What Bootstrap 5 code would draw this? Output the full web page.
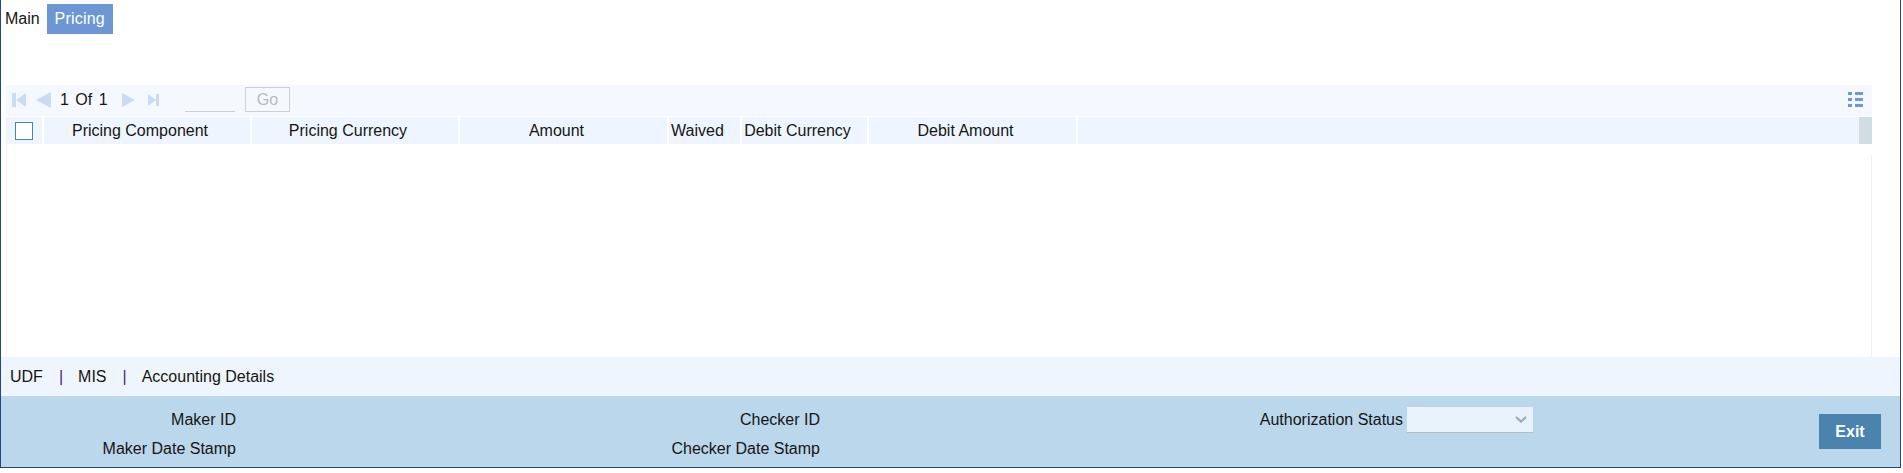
<!DOCTYPE html>
<html lang="en">
<head>
<meta charset="utf-8">
<title>Pricing</title>
<link href="https://cdn.jsdelivr.net/npm/bootstrap@5.3.0/dist/css/bootstrap.min.css" rel="stylesheet">
<style>
html,body{height:100%;background:#fff;}
body{font-family:"Liberation Sans",Arial,sans-serif;font-size:16px;color:#161513;overflow:hidden;}
.frame{width:1901px;height:468px;border:1px solid #23467f;border-top:0;display:flex;flex-direction:column;}
.tabs-bar{height:85px;padding:4px 0 0 3px;gap:6px;align-items:flex-start;}
.tab-item{height:30px;line-height:30px;padding:0 1px;color:#161513;text-decoration:none;}
.tab-item.is-on{background:#6d97d4;color:#fff;padding:0;width:66px;text-align:center;letter-spacing:.2px;}
.pager{height:31px;margin:0 28px 0 5px;background:#f5f9ff;padding:0 9px 2px 6px;}
.pg-prev{margin-left:10px;}
.pg-txt{margin-left:9px;word-spacing:2px;width:45px;white-space:nowrap;color:#161513;}
.pg-next{margin-left:17px;}
.pg-last{margin-left:13px;}
.pg-input{width:50px;height:25px;margin-left:26px;border:0;border-bottom:1px solid #ccd0d4;background:transparent;border-radius:0;padding:0;}
.pg-go{width:45px;height:25px;margin-left:10px;border:1px solid #ccd0d4;background:transparent;color:#b5b9bd;padding:0;font-size:16px;line-height:21px;border-radius:0;}
.grid-wrap{margin:1px 28px 0 5px;position:relative;flex:1;min-height:0;border-left:1px solid #eef0f5;}
.grid-tbl{table-layout:fixed;width:1865px;margin:0;border-collapse:separate;border-spacing:0;}
.grid-tbl th{height:27px;padding:0 14px 0 0;background:#eef5fe;font-weight:400;font-size:16px;text-align:center;vertical-align:middle;border:0;border-right:2px solid #fff;color:#161513;box-shadow:none;line-height:27px;white-space:nowrap;}
.grid-tbl th.fill{border-right:0;padding:0;}
.grid-tbl th.boxcell{border-right:2px solid #fff;}
.grid-tbl th.bar{background:#d0dde2;}
.chk{width:18px;height:18px;border:1px solid #4a83ae;background:#fff;display:block;margin:0 0 0 8px;}
.grid-side{position:absolute;right:0;top:38px;bottom:0;width:1px;background:#eef0f5;}
.links-bar{height:39px;background:#eef5fd;padding-left:9px;align-items:center;}
.links-bar a{color:#161513;text-decoration:none;}
.sep{color:#4b1d78;margin:0 15px 0 16px;}
.audit{height:71px;background:#bbd7ec;position:relative;display:grid;grid-template-columns:235px 584px 583px 1fr;grid-template-rows:29px 29px;padding-top:9px;}
.lbl{text-align:right;line-height:29px;white-space:nowrap;}
.status-sel{width:126px;height:26px;margin:2px 0 0 4px;border:0;border-bottom:1px solid #b3bdc5;border-radius:0;background-color:#e9f2fa;padding:0;background-position:right 6px center;background-size:12px 7px;background-image:url("data:image/svg+xml,%3csvg xmlns='http://www.w3.org/2000/svg' viewBox='0 0 12 7'%3e%3cpath fill='none' stroke='%239aabb5' stroke-width='2.2' d='M1 1l5 4.5L11 1'/%3e%3c/svg%3e");}
.exit-btn{position:absolute;right:19px;top:18px;width:62px;height:35px;background:#4a83ae;color:#fff;font-weight:700;border:0;border-radius:0;padding:0;font-size:16px;}
</style>
</head>
<body class="m-0">
<div class="frame">
  <div class="tabs-bar d-flex">
    <a class="tab-item" href="#">Main</a>
    <a class="tab-item is-on" href="#">Pricing</a>
  </div>
  <div class="pager d-flex align-items-center">
    <svg width="14" height="14" viewBox="0 0 14 14" class="flex-shrink-0"><path fill="#c9dcf3" d="M0 0h4v14H0zM14 0v14L4 7z"/></svg>
    <svg width="15" height="16" viewBox="0 0 15 16" class="flex-shrink-0 pg-prev"><path fill="#c9dcf3" d="M15 0v16L0 8z"/></svg>
    <span class="pg-txt">1 Of 1</span>
    <svg width="13" height="14" viewBox="0 0 13 14" class="pg-next flex-shrink-0"><path fill="#c9dcf3" d="M0 0v14l13-7z"/></svg>
    <svg width="11" height="12" viewBox="0 0 11 12" class="flex-shrink-0 pg-last"><path fill="#c9dcf3" d="M0 0v12l8-6zM8 0h3v12H8z"/></svg>
    <input class="pg-input form-control flex-shrink-0" type="text" aria-label="Page">
    <button class="pg-go btn flex-shrink-0" type="button">Go</button>
    <svg class="ms-auto flex-shrink-0" width="15" height="15" viewBox="0 0 15 15"><path fill="#6d9ad7" d="M0 0h4v3H0zM7 0h8v3H7zM0 6h4v3H0zM7 6h8v3H7zM0 12h4v3H0zM7 12h8v3H7z"/></svg>
  </div>
  <div class="grid-wrap">
    <table class="grid-tbl table">
      <colgroup><col style="width:37px"><col style="width:208px"><col style="width:208px"><col style="width:209px"><col style="width:73px"><col style="width:127px"><col style="width:209px"><col><col style="width:13px"></colgroup>
      <thead><tr>
        <th class="fill boxcell"><span class="chk"></span></th>
        <th>Pricing Component</th>
        <th>Pricing Currency</th>
        <th>Amount</th>
        <th>Waived</th>
        <th>Debit Currency</th>
        <th>Debit Amount</th>
        <th class="fill"></th>
        <th class="fill bar"></th>
      </tr></thead>
    </table>
    <div class="grid-side"></div>
  </div>
  <div class="links-bar d-flex">
    <a href="#">UDF</a><span class="sep">|</span><a href="#">MIS</a><span class="sep">|</span><a href="#">Accounting Details</a>
  </div>
  <div class="audit">
    <div class="lbl">Maker ID</div>
    <div class="lbl">Checker ID</div>
    <div class="lbl">Authorization Status</div>
    <div><select class="form-select status-sel" aria-label="Authorization Status"></select></div>
    <div class="lbl">Maker Date Stamp</div>
    <div class="lbl">Checker Date Stamp</div>
    <button class="exit-btn btn" type="button">Exit</button>
  </div>
</div>
<script src="https://cdn.jsdelivr.net/npm/bootstrap@5.3.0/dist/js/bootstrap.bundle.min.js"></script>
</body>
</html>
